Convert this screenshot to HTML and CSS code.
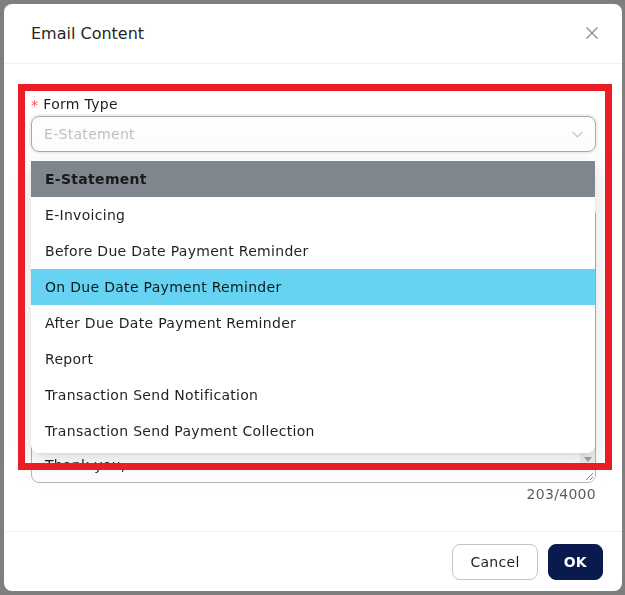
FILE: index.html
```html
<!DOCTYPE html>
<html lang="en">
<head>
<meta charset="utf-8">
<title>Email Content</title>
<link rel="stylesheet" href="styles.css">
</head>
<body>
<div class="mask"></div>
<div class="modal">
  <div class="modal-header">
    <h1 class="modal-title">Email Content</h1>
    <button class="close" aria-label="Close">
      <svg width="12" height="12" viewBox="0 0 12 12"><path d="M0.5 0.5L11.5 11.5M11.5 0.5L0.5 11.5" stroke="#8c8c8c" stroke-width="1.3" fill="none"/></svg>
    </button>
  </div>
  <div class="modal-body">
    <div class="field">
      <label class="label"><span class="req">*</span>Form Type</label>
      <div class="select-wrap">
        <div class="select">
          <span class="placeholder">E-Statement</span>
          <svg class="chevron" width="11" height="7" viewBox="0 0 11 7"><path d="M0.5 0.8L5.5 5.8L10.5 0.8" stroke="#bfbfbf" stroke-width="1.2" fill="none"/></svg>
        </div>
        <ul class="dropdown">
          <li class="option selected">E-Statement</li>
          <li class="option">E-Invoicing</li>
          <li class="option">Before Due Date Payment Reminder</li>
          <li class="option active">On Due Date Payment Reminder</li>
          <li class="option">After Due Date Payment Reminder</li>
          <li class="option">Report</li>
          <li class="option">Transaction Send Notification</li>
          <li class="option">Transaction Send Payment Collection</li>
        </ul>
      </div>
    </div>
    <div class="field field-content">
      <label class="label"><span class="req">*</span>Content</label>
      <div class="textarea">
        <div class="textarea-text">Dear Valued Customer,

Please find attached your latest statement of account.

Kindly review the details and arrange payment before the due date.

If you have already made payment, please ignore this email.

For any enquiries, please contact us.


Thank you,
Accounts Team</div>
        <div class="scrollbar">
          <div class="track"></div>
          <div class="arrow-btn"></div>
          <div class="resizer">
            <svg width="15" height="15" viewBox="0 0 15 15"><path d="M13 6L6 13M13 10L10 13" stroke="#8a8a8a" stroke-width="1" fill="none"/></svg>
          </div>
        </div>
      </div>
      <div class="counter">203/4000</div>
    </div>
  </div>
  <div class="modal-footer">
    <button class="btn">Cancel</button>
    <button class="btn btn-primary">OK</button>
  </div>
  <div class="highlight"></div>
</div>
</body>
</html>
```
FILE: styles.css
```css
* { box-sizing: border-box; }
html, body { margin: 0; height: 100%; }
body {
  font-family: "DejaVu Sans", "Liberation Sans", sans-serif;
  font-size: 14px;
  letter-spacing: 0.3px;
  color: rgba(0, 0, 0, 0.88);
  background: #fff;
  overflow: hidden;
}
.mask { position: fixed; inset: 0; background: rgba(0, 0, 0, 0.5); }
.modal {
  position: absolute;
  left: 4px; top: 4px;
  width: 618px; height: 587px;
  background: #fff;
  border-radius: 8px;
  display: flex;
  flex-direction: column;
}
.modal-header {
  height: 60px;
  flex: none;
  border-bottom: 1px solid #f0f0f0;
  display: flex;
  align-items: center;
  justify-content: space-between;
  padding: 0 24px 0 27px;
}
.modal-title {
  margin: 0;
  font-size: 16px;
  font-weight: 500;
  letter-spacing: 0;
  color: #262626;
}
.close {
  width: 12px; height: 12px;
  padding: 0; border: 0; background: none;
  display: flex;
  margin-top: -2px;
}
.modal-body {
  flex: 1;
  padding: 29px 26px 0 27px;
}
.label {
  display: flex;
  height: 22px;
  line-height: 22px;
  margin-bottom: 1px;
}
.req {
  color: #ff4d4f;
  margin-right: 5px;
  line-height: 16px;
  padding-top: 4px;
}
.select-wrap { position: relative; }
.select {
  height: 36px;
  border: 1px solid #a7abb3;
  border-radius: 8px;
  box-shadow: 0 0 0 2px rgba(0, 0, 0, 0.06);
  background: #fdfdfd;
  display: flex;
  align-items: center;
  justify-content: space-between;
  padding: 0 12px;
}
.placeholder { color: #bfbfbf; }
.dropdown {
  position: absolute;
  top: calc(100% + 8px);
  left: 0; right: 1px;
  margin: 0;
  padding: 1px 0 4px;
  list-style: none;
  background: #fff;
  border-radius: 0 0 8px 8px;
  box-shadow: 0 6px 16px 0 rgba(0,0,0,.08), 0 3px 6px -4px rgba(0,0,0,.12), 0 9px 28px 8px rgba(0,0,0,.05);
  z-index: 2;
}
.option {
  height: 36px;
  line-height: 36px;
  padding: 0 14px;
  white-space: nowrap;
}
.option.selected { background: #80868e; font-weight: bold; color: #1a1a1a; }
.option.active { background: #66d3f3; }
.field-content { margin-top: 32px; }
.textarea {
  height: 276px;
  border: 1px solid #b5b5b5;
  border-radius: 8px;
  display: flex;
  overflow: hidden;
}
.textarea-text {
  flex: 1;
  padding: 4px 11px 4px 13px;
  line-height: 22px;
  white-space: pre-line;
  overflow: hidden;
}
.scrollbar { width: 15px; display: flex; flex-direction: column; }
.track { flex: 1; background: #f1f1f1; }
.arrow-btn {
  height: 15px;
  background: #f1f1f1;
  display: flex;
  align-items: center;
  justify-content: center;
}
.arrow-btn::before {
  content: "";
  border-left: 4px solid transparent;
  border-right: 4px solid transparent;
  border-top: 5px solid #a3a3a3;
}
.resizer { height: 15px; background: #fff; display: flex; }
.counter {
  text-align: right;
  margin-top: 0;
  line-height: 22px;
  color: rgba(0, 0, 0, 0.65);
}
.modal-footer {
  flex: none;
  border-top: 1px solid #f0f0f0;
  padding: 12px 19px 11px;
  display: flex;
  justify-content: flex-end;
  gap: 10px;
}
.btn {
  height: 36px;
  border-radius: 8px;
  font: inherit;
  letter-spacing: 0.3px;
  padding: 0 17px;
  border: 1px solid #c4c4c4;
  background: #fff;
  color: rgba(0, 0, 0, 0.88);
}
.btn-primary {
  background: #0b1a4e;
  border-color: #0b1a4e;
  color: #fff;
  font-weight: bold;
  padding: 0 15px;
}
.highlight {
  position: absolute;
  left: 14px; top: 80px;
  width: 594px; height: 386px;
  border: 7px solid #e81d25;
  z-index: 3;
  pointer-events: none;
}
```
